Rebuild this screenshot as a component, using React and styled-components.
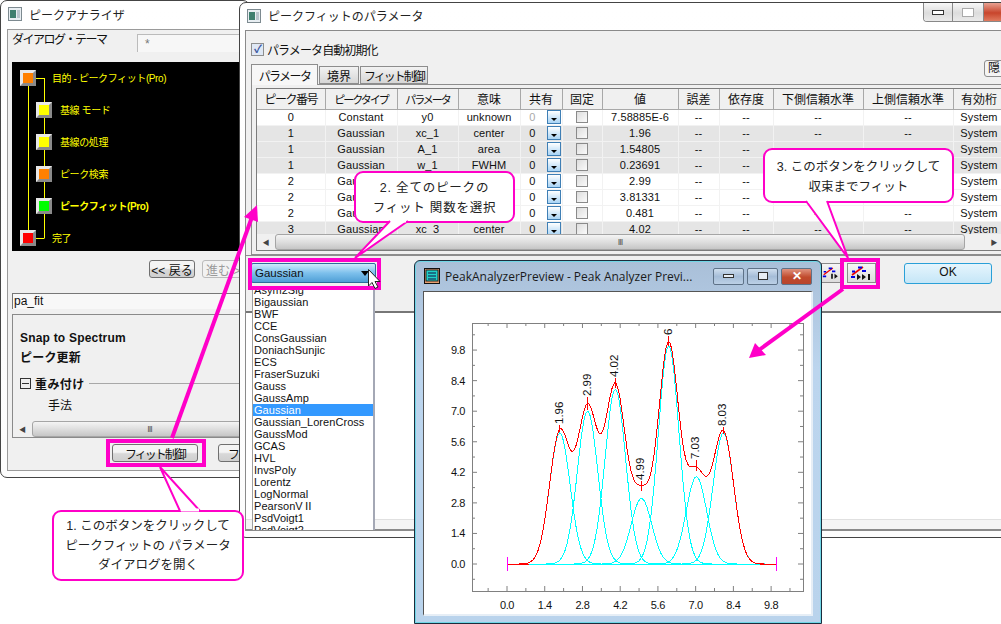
import React from "react";
import styled, { createGlobalStyle } from "styled-components";

const GlobalStyle = createGlobalStyle`
  html, body { margin: 0; padding: 0; background: #fff; }
  #root { width: 1001px; height: 624px; }
`;

const UI_FONT = `"Liberation Sans", "Noto Sans CJK JP", sans-serif`;

const Desktop = styled.div`
  position: relative;
  width: 1001px;
  height: 624px;
  overflow: hidden;
  background: #fff;
  font-family: ${UI_FONT};
  font-size: 12px;
  color: #111;
`;

const Frame = styled.div`
  position: absolute;
  left: ${(p) => p.$left}px;
  top: ${(p) => p.$top}px;
  width: ${(p) => p.$width}px;
  height: ${(p) => p.$height}px;
  box-sizing: border-box;
  border: 1px solid #444;
  border-radius: 7px;
  background: linear-gradient(#fff, #fcfcfc);
  display: flex;
  flex-direction: column;
  overflow: hidden;
`;

const TitleBar = styled.div`
  height: ${(p) => p.$height}px;
  flex: none;
  box-sizing: border-box;
  display: flex;
  align-items: center;
  gap: 7px;
  padding: 0 0 2px 7px;
  font-size: 12px;
  color: #222;
`;

const FirstBody = styled.div`
  flex: 1;
  margin: 0 -20px 6px 6px;
  padding: 4px 0 0 4px;
  border: 1px solid #9a9a9a;
  background: #f0f0f0;
  display: flex;
  flex-direction: column;
`;

const ThemeRow = styled.div`
  height: 18px;
  display: flex;
  gap: 13px;
  align-items: flex-start;
`;

const ThemeLabel = styled.span`
  width: 112px;
  white-space: nowrap;
  line-height: 13px;
  letter-spacing: -1.5px;
`;

const ThemeInput = styled.div`
  flex: 1;
  height: 18px;
  box-sizing: border-box;
  padding: 2px 0 0 7px;
  border-left: 1px solid #bbb;
  border-top: 1px solid #bbb;
  background: #f7f7f7;
  color: #777;
`;

const FlowPanel = styled.div`
  position: relative;
  height: 189px;
  margin-top: 10px;
  padding: 8px 0 0 8px;
  box-sizing: border-box;
  background: #000;
`;

const FlowLines = styled.svg`
  position: absolute;
  left: 0;
  top: 0;
`;

const FlowRow = styled.div`
  position: relative;
  height: 32px;
  display: flex;
  align-items: flex-start;
  padding-left: ${(p) => (p.$inner ? 16 : 0)}px;
  gap: ${(p) => (p.$inner ? 8 : 16)}px;
  color: #ff0;
  font-size: 10px;
  letter-spacing: -0.4px;
  line-height: 17px;
  font-weight: ${(p) => (p.$active ? 700 : 400)};
`;

const FlowNode = styled.span`
  width: 10px;
  height: 10px;
  border: 3px solid;
  border-color: #e8e8e8 #8a8a8a #8a8a8a #e8e8e8;
  background: ${(p) => p.$color};
`;

const NavRow = styled.div`
  display: flex;
  gap: 7px;
  margin: 9px 0 0 137px;
`;

const PushButton = styled.button`
  width: ${(p) => p.$width}px;
  height: 18px;
  flex: none;
  padding: 0 0 0 ${(p) => p.$indent || 0}px;
  border: 1px solid ${(p) => (p.$disabled ? "#bbb" : "#707070")};
  border-radius: 3px;
  background: ${(p) =>
    p.$disabled
      ? "#f2f2f2"
      : "linear-gradient(#f4f4f4 45%, #d8d8d8 55%, #cfcfcf)"};
  font-family: inherit;
  font-size: 12px;
  letter-spacing: ${(p) => p.$track || 0}px;
  text-align: ${(p) => (p.$indent ? "left" : "center")};
  color: ${(p) => (p.$disabled ? "#999" : "#111")};
  white-space: nowrap;
  overflow: hidden;
`;

const NameField = styled.div`
  height: 15px;
  margin-top: 15px;
  padding-left: 1px;
  border-top: 1px solid #777;
  border-left: 1px solid #777;
  background: #f8f8f8;
  line-height: 15px;
`;

const PropertyPanel = styled.div`
  height: 124px;
  margin-top: 5px;
  box-sizing: border-box;
  border: 1px solid #8a8a8a;
  display: flex;
  flex-direction: column;
`;

const PropertyList = styled.div`
  flex: 1;
  padding: 13px 0 0 7px;
  display: flex;
  flex-direction: column;
`;

const PropertyTitle = styled.div`
  font-weight: 700;
  letter-spacing: 0.2px;
  line-height: 20px;
`;

const GroupRow = styled.div`
  display: flex;
  align-items: center;
  gap: 4px;
  height: 20px;
  margin-top: 5px;
  font-weight: 700;
  letter-spacing: 0.4px;
  &::after {
    content: "";
    flex: 1;
    height: 1px;
    background: #a8a8a8;
  }
`;

const MinusBox = styled.span`
  position: relative;
  width: 9px;
  height: 9px;
  border: 1px solid #333;
  &::before {
    content: "";
    position: absolute;
    left: 1px;
    right: 1px;
    top: 4px;
    height: 1px;
    background: #333;
  }
`;

const PropertyItem = styled.div`
  margin: 5px 0 0 28px;
  line-height: 16px;
`;

const ScrollTrack = styled.div`
  height: 16px;
  flex: none;
  display: flex;
  align-items: stretch;
  background: #f0f0f0;
  color: #444;
`;

const ScrollArrow = styled.span`
  width: ${(p) => p.$width}px;
  flex: none;
  display: flex;
  align-items: center;
  justify-content: center;
  font-size: 7px;
`;

const ScrollThumb = styled.span`
  flex: ${(p) => (p.$width ? `0 0 ${p.$width}px` : 1)};
  display: flex;
  align-items: center;
  justify-content: center;
  border: 1px solid #a5a5a5;
  border-radius: 3px;
  background: linear-gradient(#f4f4f4, #dedede 50%, #c6c6c6);
  font-size: 9px;
  letter-spacing: -1px;
  color: #555;
`;

const ActionRow = styled.div`
  display: flex;
  gap: 20px;
  margin: 6px 0 0 100px;
`;

const SecondBody = styled.div`
  flex: 1;
  margin: 0 -2px 6px 5px;
  border: 1px solid #8a8a8a;
  background: #f0f0f0;
  display: flex;
  flex-direction: column;
`;

const CheckRow = styled.label`
  height: 33px;
  flex: none;
  display: flex;
  align-items: center;
  gap: 3px;
  padding: 3px 0 0 5px;
  box-sizing: border-box;
  letter-spacing: -0.9px;
`;

const TickBox = styled.span`
  width: 11px;
  height: 11px;
  border: 1px solid #8e8f8f;
  background: #dfe8f5;
  color: #39539c;
  font-size: 11px;
  font-weight: 700;
  line-height: 11px;
  text-align: center;
`;

const TabStrip = styled.div`
  position: relative;
  height: 20px;
  flex: none;
  display: flex;
  gap: 1px;
  align-items: flex-end;
  padding-left: 5px;
`;

const Tab = styled.div`
  width: ${(p) => p.$width}px;
  height: ${(p) => (p.$active ? 21 : 18)}px;
  box-sizing: border-box;
  display: flex;
  align-items: center;
  justify-content: center;
  margin-bottom: ${(p) => (p.$active ? -1 : 0)}px;
  border: 1px solid #8d8d8d;
  border-bottom: ${(p) => (p.$active ? "none" : "1px solid #8d8d8d")};
  background: ${(p) =>
    p.$active ? "#f7f7f7" : "linear-gradient(#f2f2f2, #d6d6d6)"};
  letter-spacing: ${(p) => p.$track || 0}px;
  white-space: nowrap;
  z-index: ${(p) => (p.$active ? 1 : 0)};
`;

const HideButton = styled.div`
  position: absolute;
  right: 13px;
  top: -4px;
  width: 18px;
  height: 15px;
  border: 1px solid #8d8d8d;
  border-radius: 3px;
  background: #f4f4f4;
  text-align: center;
  line-height: 15px;
`;

const TabPane = styled.div`
  height: 171px;
  flex: none;
  box-sizing: border-box;
  margin-left: 5px;
  padding: 3px 0 0 4px;
  border: 1px solid #8d8d8d;
  border-right: none;
`;

const TableBox = styled.div`
  height: 163px;
  box-sizing: border-box;
  border: 1px solid #7c7c7c;
  border-right: none;
  display: flex;
  flex-direction: column;
  overflow: hidden;
`;

const TableClip = styled.div`
  flex: 1;
  overflow: hidden;
  background: #fff;
`;

const ParamTable = styled.table`
  table-layout: fixed;
  width: 748px;
  border-collapse: collapse;
  text-align: center;
  font-size: 11px;
  letter-spacing: 0.1px;
`;

const HeadCell = styled.th`
  box-sizing: border-box;
  width: ${(p) => p.$width}px;
  height: 20px;
  padding: 0;
  border-right: 1px solid #a8a8a8;
  border-bottom: 1px solid #a8a8a8;
  background: #f0f0f0;
  font-weight: 400;
  font-size: ${(p) => (p.$track < -1.5 ? 11 : 12)}px;
  letter-spacing: ${(p) => p.$track || 0}px;
  white-space: nowrap;
  overflow: hidden;
`;

const BodyRow = styled.tr`
  background: ${(p) => (p.$shaded ? "#e5e5e5" : "#fff")};
`;

const BodyCell = styled.td`
  box-sizing: border-box;
  height: 16px;
  padding: 0;
  border-right: 1px solid #f2f2f2;
  border-bottom: 1px solid #f2f2f2;
  white-space: nowrap;
  overflow: hidden;
  color: ${(p) => (p.$muted ? "#aaa" : "#111")};
`;

const ShareCell = styled.div`
  display: flex;
  align-items: center;
  justify-content: flex-end;
  gap: 11px;
  padding-right: 1px;
`;

const SpinBox = styled.span`
  position: relative;
  width: 12px;
  height: 12px;
  border: 1px solid #3f7fb5;
  background: linear-gradient(#fff, #a9d4f5);
  &::after {
    content: "";
    position: absolute;
    left: 3px;
    top: 7px;
    border: 3px solid transparent;
    border-top: 3px solid #000;
  }
`;

const FixBox = styled.span`
  display: block;
  width: 10px;
  height: 10px;
  margin: auto;
  border: 1px solid #8a8a8a;
  background: linear-gradient(135deg, #ddd, #fbfbfb);
`;

const Footer = styled.div`
  height: 58px;
  flex: none;
  box-sizing: border-box;
  display: flex;
  align-items: flex-start;
  padding: 7px 10px 0 5px;
  border-top: 1px solid #8d8d8d;
  border-bottom: 2px solid #777;
`;

const Combo = styled.div`
  position: relative;
  width: 125px;
  height: 20px;
  box-sizing: border-box;
  padding-left: 3px;
  border: 1px solid #2d6d9b;
  border-radius: 2px;
  background: linear-gradient(#cfeafb, #7dc0ec 50%, #4f9fd6);
  line-height: 18px;
  font-size: 11.5px;
  &::after {
    content: "";
    position: absolute;
    right: 6px;
    top: 7px;
    border: 4px solid transparent;
    border-top: 5px solid #000;
  }
`;

const IconButton = styled.div`
  width: ${(p) => p.$width}px;
  height: 20px;
  flex: none;
  box-sizing: border-box;
  margin-left: ${(p) => p.$gap};
  display: flex;
  align-items: center;
  justify-content: center;
  border: 1px solid #8a8a8a;
  background: linear-gradient(#f6f6f6, #dcdcdc);
`;

const OkButton = styled.div`
  width: 86px;
  height: 19px;
  flex: none;
  margin-left: 28px;
  border: 1px solid #2aa0d8;
  border-radius: 3px;
  background: linear-gradient(#e6f5fd, #c5e6f7);
  text-align: center;
  line-height: 17px;
`;

const Results = styled.div`
  flex: 1;
  background: #fff;
`;

const ResultLines = styled.div`
  height: 9px;
  flex: none;
  border-top: 1px solid #e0e0e0;
  border-bottom: 1px solid #8a8a8a;
  background: #f4f4f4;
`;

const CaptionButtons = styled.div`
  position: absolute;
  right: 0;
  top: 0;
  height: 18px;
  display: flex;
  border: 1px solid #888;
  border-top: none;
  border-radius: 0 0 4px 4px;
  overflow: hidden;
`;

const CaptionButton = styled.span`
  width: ${(p) => p.$width}px;
  display: flex;
  align-items: center;
  justify-content: center;
  border-right: 1px solid #888;
  background: ${(p) =>
    p.$close
      ? "linear-gradient(#e8a292, #c8452c 55%, #e07a5e)"
      : "linear-gradient(#f8f8f8, #dcdcdc 55%, #eaeaea)"};
`;

const CaptionGlyph = styled.span`
  width: 10px;
  height: ${(p) => p.$height}px;
  border: 1px solid ${(p) => p.$color};
  background: #fff;
`;

const FunctionList = styled.div`
  position: absolute;
  left: 252px;
  top: 286px;
  width: 123px;
  height: 244px;
  box-sizing: border-box;
  overflow: hidden;
  background: #fff;
  border-left: 1px solid #a0a0a0;
  border-right: 2px solid #a4a8b5;
`;

const FunctionItem = styled.div`
  height: 12px;
  line-height: 12px;
  padding-left: 1px;
  font-size: 11px;
  letter-spacing: 0.05px;
  white-space: nowrap;
  background: ${(p) => (p.$selected ? "#3399ff" : "transparent")};
  color: ${(p) => (p.$selected ? "#fff" : "#111")};
  &:first-child {
    margin-top: -2px;
  }
`;

const PreviewFrame = styled.div`
  position: absolute;
  left: 414px;
  top: 260px;
  width: 408px;
  height: 364px;
  box-sizing: border-box;
  border: 1px solid #1b2c3c;
  border-radius: 6px 6px 0 0;
  box-shadow: inset 0 0 0 1px #6fd6e6;
  background: linear-gradient(#a9bfd8, #bcd5ee 30%, #b9d3ec);
  display: flex;
  flex-direction: column;
  padding: 0 8px 7px;
`;

const PreviewTitle = styled.div`
  height: 30px;
  flex: none;
  display: flex;
  align-items: center;
  gap: 5px;
  padding-left: 1px;
  font-family: "Open Sans", sans-serif;
  font-size: 12px;
  color: #1a1a1a;
  white-space: nowrap;
`;

const PreviewButtons = styled.div`
  margin-left: auto;
  display: flex;
  gap: 3px;
  padding-right: 1px;
`;

const PreviewButton = styled.span`
  width: 29px;
  height: 15px;
  display: flex;
  align-items: center;
  justify-content: center;
  border: 1px solid #5e7288;
  border-radius: 2px;
  color: #fff;
  font-size: 12px;
  font-weight: 700;
  line-height: 1;
  background: ${(p) =>
    p.$close
      ? "linear-gradient(#e0937f, #c04a2c 55%, #b8452e)"
      : "linear-gradient(#cfdeee, #a5bdd8 50%, #bcd0e6)"};
`;

const PreviewGlyph = styled.span`
  width: ${(p) => p.$width}px;
  height: ${(p) => p.$height}px;
  border: 1px solid #333;
  background: #e8eef5;
`;

const PlotArea = styled.div`
  flex: 1;
  border-top: 1px solid #555;
  border-left: 1px solid #555;
  border-right: 2px solid #e6eef6;
  border-bottom: 2px solid #e6eef6;
  background: #fff;
  overflow: hidden;
`;

const PlotLabel = styled.text`
  font-family: "Liberation Sans", sans-serif;
  font-size: ${(p) => (p.$peak ? 11.5 : 11)}px;
  letter-spacing: ${(p) => (p.$peak ? 0 : -0.4)}px;
  fill: #111;
`;

const Highlight = styled.div`
  position: absolute;
  left: ${(p) => p.$left}px;
  top: ${(p) => p.$top}px;
  width: ${(p) => p.$width}px;
  height: ${(p) => p.$height}px;
  box-sizing: border-box;
  border: 4px solid #ff00c8;
  pointer-events: none;
`;

const Overlay = styled.svg`
  position: absolute;
  left: 0;
  top: 0;
  pointer-events: none;
`;

const Callout = styled.div`
  position: absolute;
  left: ${(p) => p.$left}px;
  top: ${(p) => p.$top}px;
  width: ${(p) => p.$width}px;
  height: ${(p) => p.$height}px;
  box-sizing: border-box;
  padding-top: ${(p) => p.$pad}px;
  border: 2px solid #ff00c8;
  border-radius: 9px;
  background: #fff;
  text-align: center;
  font-size: 12.5px;
  line-height: 19.5px;
  letter-spacing: ${(p) => p.$track || 0}px;
  color: #222;
`;

const CalloutLine = styled.div`
  white-space: nowrap;
`;

const flowSteps = [
  { label: "目的 - ピークフィット(Pro)", color: "#ff8000" },
  { label: "基線 モード", color: "#ffff00", inner: true },
  { label: "基線の処理", color: "#ffff00", inner: true },
  { label: "ピーク検索", color: "#ff8000", inner: true },
  { label: "ピークフィット(Pro)", color: "#00ff00", inner: true, active: true },
  { label: "完了", color: "#ff0000" },
];

const columns = [
  ["ピーク番号", 68, -1.5],
  ["ピークタイプ", 72, -2],
  ["パラメータ", 61, -2],
  ["意味", 62],
  ["共有", 42],
  ["固定", 40],
  ["値", 76],
  ["誤差", 41],
  ["依存度", 54],
  ["下側信頼水準", 90],
  ["上側信頼水準", 90],
  ["有効桁", 52],
];

const rows = [
  ["0", "Constant", "y0", "unknown", "7.58885E-6", false, true],
  ["1", "Gaussian", "xc_1", "center", "1.96", true],
  ["1", "Gaussian", "A_1", "area", "1.54805", true],
  ["1", "Gaussian", "w_1", "FWHM", "0.23691", true],
  ["2", "Gaussian", "xc_2", "center", "2.99", false],
  ["2", "Gaussian", "A_2", "area", "3.81331", false],
  ["2", "Gaussian", "w_2", "FWHM", "0.481", false],
  ["3", "Gaussian", "xc_3", "center", "4.02", true],
];

const functions = [
  "Asym2Sig",
  "Bigaussian",
  "BWF",
  "CCE",
  "ConsGaussian",
  "DoniachSunjic",
  "ECS",
  "FraserSuzuki",
  "Gauss",
  "GaussAmp",
  "Gaussian",
  "Gaussian_LorenCross",
  "GaussMod",
  "GCAS",
  "HVL",
  "InvsPoly",
  "Lorentz",
  "LogNormal",
  "PearsonVⅡ",
  "PsdVoigt1",
  "PsdVoigt2",
];

// chart uses screen coordinates through its viewBox
const peaks = [
  { c: 1.96, h: 6, label: "1.96", top: 425, end: 432 },
  { c: 2.99, h: 7, label: "2.99", top: 397, end: 410 },
  { c: 4.02, h: 8, label: "4.02", top: 378, end: 388 },
  { c: 4.99, h: 3, label: "4.99", top: 481, end: 491 },
  { c: 6, h: 10, label: "6", top: 336, end: 346 },
  { c: 7.03, h: 4, label: "7.03", top: 460, end: 471 },
  { c: 8.03, h: 6, label: "8.03", top: 427, end: 434 },
];

const SIGMA = 0.38;
const px = (x) => 507 + x * 26.95;
const py = (y) => 564 - y * 21.83;
const gauss = (p, x) => p.h * Math.exp(-((x - p.c) ** 2) / (2 * SIGMA * SIGMA));

const curvePath = (fn, from = 0, to = 10) => {
  let d = "";
  for (let x = from; x <= to + 0.001; x += 0.05) {
    d += `${d ? "L" : "M"}${px(x).toFixed(1)} ${py(fn(x)).toFixed(1)}`;
  }
  return d;
};

const sumCurve = (x) => peaks.reduce((acc, p) => acc + gauss(p, x), 0);

const majorTicks = [0, 1.4, 2.8, 4.2, 5.6, 7.0, 8.4, 9.8];

const PeakChart = () => {
  const xMinor = [];
  for (let k = -1; k <= 15; k += 1) xMinor.push(k * 0.7);
  const yMinor = [];
  for (let k = -1; k <= 16; k += 1) yMinor.push(k * 0.7);
  return (
    <svg width="389" height="323" viewBox="424 292 389 323">
      <rect x="472.5" y="323.5" width="331" height="268" fill="none" stroke="#808080" />
      {xMinor.map((v) => {
        const major = majorTicks.includes(Number(v.toFixed(1)));
        const x = px(v);
        if (x < 473 || x > 803) return null;
        const len = major ? 5 : 3;
        return (
          <g key={v} stroke="#808080">
            <line x1={x} x2={x} y1="323" y2={323 + len} />
            <line x1={x} x2={x} y1="591" y2={591 - len} />
          </g>
        );
      })}
      {yMinor.map((v) => {
        const major = majorTicks.includes(Number(v.toFixed(1)));
        const y = py(v);
        if (y < 324 || y > 591) return null;
        const len = major ? 5 : 3;
        return (
          <g key={v} stroke="#808080">
            <line x1="472" x2={472 + len} y1={y} y2={y} />
            <line x1="803" x2={803 - len} y1={y} y2={y} />
          </g>
        );
      })}
      {majorTicks.map((v) => (
        <PlotLabel key={`x${v}`} x={px(v)} y="609" textAnchor="middle">
          {v.toFixed(1)}
        </PlotLabel>
      ))}
      {majorTicks.map((v) => (
        <PlotLabel key={`y${v}`} x="465" y={py(v) + 4} textAnchor="end">
          {v.toFixed(1)}
        </PlotLabel>
      ))}
      <g shapeRendering="crispEdges" fill="none">
        <line x1={px(0)} x2={px(10)} y1={py(0)} y2={py(0)} stroke="#00ffff" />
        {peaks.map((p) => (
          <path
            key={p.c}
            d={curvePath((x) => gauss(p, x), Math.max(0, p.c - 2), Math.min(10, p.c + 2))}
            stroke="#00ffff"
          />
        ))}
        <path d={curvePath(sumCurve)} stroke="#ff0000" />
        <line x1={px(0)} x2={px(0.8)} y1={py(0)} y2={py(0)} stroke="#ff0000" />
        <line x1={px(9.4)} x2={px(10)} y1={py(0)} y2={py(0)} stroke="#ff0000" />
        <line x1={px(0)} x2={px(0)} y1="557" y2="571" stroke="#ff00ff" />
        <line x1={px(10)} x2={px(10)} y1="557" y2="571" stroke="#ff00ff" />
      </g>
      {peaks.map((p) => (
        <g key={p.label}>
          <line
            x1={px(p.c)}
            x2={px(p.c)}
            y1={p.top}
            y2={p.end}
            stroke="#ff0000"
            shapeRendering="crispEdges"
          />
          <PlotLabel
            $peak
            transform={`translate(${px(p.c) + 3} ${p.top - 1}) rotate(-90)`}
          >
            {p.label}
          </PlotLabel>
        </g>
      ))}
    </svg>
  );
};

const WindowIcon = () => (
  <svg width="14" height="14" viewBox="0 0 14 14">
    <rect x="0.5" y="0.5" width="13" height="13" fill="#e8eef2" stroke="#7d8a90" />
    <rect x="2" y="3" width="6" height="8" fill="#3f7f6f" />
    <rect x="9" y="3" width="3" height="8" fill="#b8c4cc" />
  </svg>
);

const PreviewIcon = () => (
  <svg width="16" height="16" viewBox="0 0 16 16">
    <rect x="0.5" y="0.5" width="15" height="15" fill="#e8a070" stroke="#111" />
    <rect x="2" y="2" width="12" height="11" fill="#20d0c8" stroke="#222" />
    <path d="M4 5h8M4 8h8M4 11h8" stroke="#114" />
  </svg>
);

const FitStepIcon = ({ full }) => (
  <svg width="24" height="16" viewBox="0 0 24 16">
    <path d="M2 10L13 2" stroke="#f00000" strokeWidth="1.6" />
    <path d="M8 2.5h4M12 6h4M2 6.5h3M1 12h4" stroke="#0000e0" strokeWidth="2" />
    {full ? (
      <path d="M7 9l4 3-4 3zM12 9l4 3-4 3zM18 9h2v6h-2z" fill="#111" />
    ) : (
      <path d="M11 9h2v6h-2zM15 9l4 3-4 3z" fill="#111" />
    )}
  </svg>
);

const Arrows = () => (
  <Overlay width="1001" height="624" viewBox="0 0 1001 624">
    <path d="M172 438L252 217" stroke="#ff00c8" strokeWidth="4" fill="none" />
    <path d="M257 205L244 217L258 222Z" fill="#ff00c8" />
    <path d="M843 289L759 350" stroke="#ff00c8" strokeWidth="4" fill="none" />
    <path d="M749 358L755 343L766 355Z" fill="#ff00c8" />
  </Overlay>
);

const CalloutTails = () => (
  <Overlay width="1001" height="624" viewBox="0 0 1001 624">
    <path d="M180 511L160 467L200 511" fill="#fff" stroke="#ff00c8" strokeWidth="2" />
    <path d="M390 221L355 258L408 221" fill="#fff" stroke="#ff00c8" strokeWidth="2" />
    <path d="M806 201L848 258L827 201" fill="#fff" stroke="#ff00c8" strokeWidth="2" />
    <path d="M181 510H199M392 221H406M808 201H826" stroke="#fff" strokeWidth="3" />
  </Overlay>
);

const Cursor = () => (
  <Overlay width="1001" height="624" viewBox="0 0 1001 624">
    <path
      d="M368.5 269.5V286L372 282.5L375 288.5L378 287L375 281.5H380Z"
      fill="#fff"
      stroke="#222"
      strokeWidth="1"
    />
  </Overlay>
);

const App = () => {
  return (
    <Desktop>
      <GlobalStyle />

      <Frame $left={0} $top={0} $width={250} $height={478}>
        <TitleBar $height={28}>
          <WindowIcon />
          ピークアナライザ
        </TitleBar>
        <FirstBody>
          <ThemeRow>
            <ThemeLabel>ダイアログ・テーマ</ThemeLabel>
            <ThemeInput>*</ThemeInput>
          </ThemeRow>
          <FlowPanel>
            <FlowLines width="240" height="189">
              <path
                d="M16.5 16V168M32.5 16V176M24 16.5H32.5M24 176.5H32.5"
                stroke="#ffff00"
                fill="none"
              />
            </FlowLines>
            {flowSteps.map((step) => (
              <FlowRow key={step.label} $inner={step.inner} $active={step.active}>
                <FlowNode $color={step.color} />
                {step.label}
              </FlowRow>
            ))}
          </FlowPanel>
          <NavRow>
            <PushButton $width={46}>&lt;&lt; 戻る</PushButton>
            <PushButton $width={46} $disabled $indent={3}>
              進む &gt;&gt;
            </PushButton>
          </NavRow>
          <NameField>pa_fit</NameField>
          <PropertyPanel>
            <PropertyList>
              <PropertyTitle>Snap to Spectrum</PropertyTitle>
              <PropertyTitle>ピーク更新</PropertyTitle>
              <GroupRow>
                <MinusBox />
                重み付け
              </GroupRow>
              <PropertyItem>手法</PropertyItem>
            </PropertyList>
            <ScrollTrack>
              <ScrollArrow $width={19}>◀</ScrollArrow>
              <ScrollThumb>III</ScrollThumb>
            </ScrollTrack>
          </PropertyPanel>
          <ActionRow>
            <PushButton $width={86} $track={-2}>
              フィット制御
            </PushButton>
            <PushButton $width={60} $track={-2}>
              フィット
            </PushButton>
          </ActionRow>
        </FirstBody>
      </Frame>

      <Frame $left={239} $top={2} $width={778} $height={536}>
        <TitleBar $height={27}>
          <WindowIcon />
          ピークフィットのパラメータ
          <CaptionButtons>
            <CaptionButton $width={28}>
              <CaptionGlyph $height={3} $color="#333" />
            </CaptionButton>
            <CaptionButton $width={30}>
              <CaptionGlyph $height={7} $color="#aaa" />
            </CaptionButton>
            <CaptionButton $width={30} $close />
          </CaptionButtons>
        </TitleBar>
        <SecondBody>
          <CheckRow>
            <TickBox>✓</TickBox>
            パラメータ自動初期化
          </CheckRow>
          <TabStrip>
            <Tab $width={67} $active $track={-1.6}>
              パラメータ
            </Tab>
            <Tab $width={40}>境界</Tab>
            <Tab $width={68} $track={-2}>
              フィット制御
            </Tab>
            <HideButton>隠</HideButton>
          </TabStrip>
          <TabPane>
            <TableBox>
              <TableClip>
                <ParamTable>
                  <thead>
                    <tr>
                      {columns.map(([name, width, track]) => (
                        <HeadCell key={name} $width={width} $track={track}>
                          {name}
                        </HeadCell>
                      ))}
                    </tr>
                  </thead>
                  <tbody>
                    {rows.map(([no, type, param, meaning, value, shaded, first]) => (
                      <BodyRow key={param} $shaded={shaded}>
                        <BodyCell>{no}</BodyCell>
                        <BodyCell>{type}</BodyCell>
                        <BodyCell>{param}</BodyCell>
                        <BodyCell>{meaning}</BodyCell>
                        <BodyCell $muted={first}>
                          <ShareCell>
                            0
                            <SpinBox />
                          </ShareCell>
                        </BodyCell>
                        <BodyCell>
                          <FixBox />
                        </BodyCell>
                        <BodyCell>{value}</BodyCell>
                        <BodyCell>--</BodyCell>
                        <BodyCell>--</BodyCell>
                        <BodyCell>--</BodyCell>
                        <BodyCell>--</BodyCell>
                        <BodyCell>System</BodyCell>
                      </BodyRow>
                    ))}
                  </tbody>
                </ParamTable>
              </TableClip>
              <ScrollTrack>
                <ScrollArrow $width={18}>◀</ScrollArrow>
                <ScrollThumb $width={688}>III</ScrollThumb>
                <ScrollArrow $width={58}>▶</ScrollArrow>
              </ScrollTrack>
            </TableBox>
          </TabPane>
          <Footer>
            <Combo>Gaussian</Combo>
            <IconButton $width={22} $gap="445px">
              <FitStepIcon />
            </IconButton>
            <IconButton $width={29} $gap="4px">
              <FitStepIcon full />
            </IconButton>
            <OkButton>OK</OkButton>
          </Footer>
          <Results />
          <ResultLines />
        </SecondBody>
      </Frame>

      <FunctionList>
        {functions.map((name) => (
          <FunctionItem key={name} $selected={name === "Gaussian"}>
            {name}
          </FunctionItem>
        ))}
      </FunctionList>

      <PreviewFrame>
        <PreviewTitle>
          <PreviewIcon />
          PeakAnalyzerPreview - Peak Analyzer Previ...
          <PreviewButtons>
            <PreviewButton>
              <PreviewGlyph $width={9} $height={2} />
            </PreviewButton>
            <PreviewButton>
              <PreviewGlyph $width={8} $height={6} />
            </PreviewButton>
            <PreviewButton $close>✕</PreviewButton>
          </PreviewButtons>
        </PreviewTitle>
        <PlotArea>
          <PeakChart />
        </PlotArea>
      </PreviewFrame>

      <Highlight $left={106} $top={439} $width={100} $height={28} />
      <Highlight $left={248} $top={258} $width={133} $height={32} />
      <Highlight $left={840} $top={258} $width={40} $height={31} />
      <Arrows />

      <Callout $left={52} $top={510} $width={192} $height={71} $pad={5}>
        <CalloutLine>1. このボタンをクリックして</CalloutLine>
        <CalloutLine>ピークフィットの パラメータ</CalloutLine>
        <CalloutLine>ダイアログを開く</CalloutLine>
      </Callout>
      <Callout $left={354} $top={171} $width={161} $height={52} $pad={6} $track={0.8}>
        <CalloutLine>2. 全てのピークの</CalloutLine>
        <CalloutLine>フィット 関数を選択</CalloutLine>
      </Callout>
      <Callout $left={763} $top={148} $width={191} $height={55} $pad={8}>
        <CalloutLine>3. このボタンをクリックして</CalloutLine>
        <CalloutLine>収束までフィット</CalloutLine>
      </Callout>
      <CalloutTails />
      <Cursor />
    </Desktop>
  );
};

export default App;
